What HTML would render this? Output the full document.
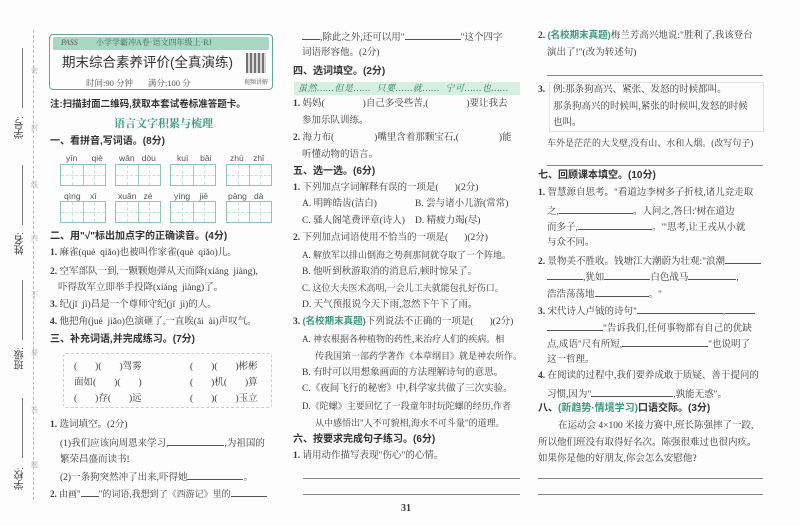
<!DOCTYPE html>
<html><head><meta charset="utf-8">
<style>
*{margin:0;padding:0;box-sizing:border-box}
body{width:800px;height:526px;background:#fdfdfd;position:relative;overflow:hidden;font-family:"Liberation Serif","Noto Serif CJK SC",serif;color:#3a3a3a;font-size:9.5px}
.l{position:absolute;white-space:nowrap;line-height:14px;height:14px}
.j{text-align:justify;text-align-last:justify;white-space:normal;overflow:visible}
.f{font-size:9px;white-space:nowrap}
.m{width:218px}.r{width:216px}.lw{width:222px}
.h{font-family:"Liberation Sans","Noto Sans CJK SC",sans-serif;font-weight:bold;color:#333;font-size:10px}
.g{color:#3c9a7c;font-family:"Liberation Sans","Noto Sans CJK SC",sans-serif;font-weight:bold}
.u{display:inline-block;border-bottom:1px solid #555;height:11px;vertical-align:baseline}
.py{font-family:"Liberation Sans",sans-serif;font-size:8.5px;color:#555}
.box{position:absolute;border:1px solid #8cc8b0;height:22px;display:flex}
.box div{flex:1;border-right:1px solid #9cd0bc;position:relative}
.box div:last-child{border-right:none}
.box div:after{content:"";position:absolute;left:50%;top:0;bottom:0;border-left:1px dashed #c6e4d8}
.box div:before{content:"";position:absolute;top:50%;left:0;right:0;border-top:1px dashed #c6e4d8}
.hr{position:absolute;border-top:1px solid #888;height:0}
.side{position:absolute;font-family:"Liberation Sans","Noto Sans CJK SC",sans-serif;font-size:10px;color:#444;writing-mode:vertical-rl;transform:rotate(180deg)}
.sm{position:absolute;font-size:7px;color:#aaa}
</style></head><body>

<div style="position:absolute;left:33px;top:30px;height:470px;border-left:1px dashed #bbb"></div>
<div style="position:absolute;left:22px;top:48px;height:60px;border-left:1px solid #777"></div>
<div style="position:absolute;left:22px;top:165px;height:60px;border-left:1px solid #777"></div>
<div style="position:absolute;left:22px;top:280px;height:60px;border-left:1px solid #777"></div>
<div style="position:absolute;left:22px;top:398px;height:60px;border-left:1px solid #777"></div>
<div class="side" style="left:13px;top:116px">学号:</div>
<div class="side" style="left:13px;top:232px">姓名:</div>
<div class="side" style="left:13px;top:347px">班级:</div>
<div class="side" style="left:13px;top:467px">学校:</div>
<div class="sm" style="left:31px;top:66px">密</div>
<div class="sm" style="left:31px;top:123px">封</div>
<div class="sm" style="left:31px;top:180px">线</div>
<div class="sm" style="left:31px;top:233px">内</div>
<div class="sm" style="left:31px;top:290px">不</div>
<div class="sm" style="left:31px;top:348px">要</div>
<div class="sm" style="left:31px;top:405px">答</div>
<div class="sm" style="left:31px;top:460px">题</div>

<div style="position:absolute;left:49px;top:34px;width:224px;height:56px;border:1.5px solid #5fa98e;border-radius:4px"></div>
<div style="position:absolute;left:53px;top:37px;width:216px;height:13px;background:#a8d8c4;border-radius:2px"></div>
<div class="l" style="left:61px;top:36px;font-size:8px;color:#555;font-style:italic">PASS</div>
<div class="l" style="left:96px;top:36px;font-size:8px;color:#2f6f58">小学学霸冲A卷·语文四年级上·RJ</div>
<div class="l" style="left:62px;top:54px;font-size:13.5px;height:18px;line-height:18px;font-family:'Liberation Sans','Noto Sans CJK SC',sans-serif;color:#333">期末综合素养评价(全真演练)</div>
<div style="position:absolute;left:246px;top:53px;width:20px;height:20px;background:repeating-linear-gradient(90deg,#444 0 2px,#ccc 2px 4px);opacity:.75"></div>
<div class="l" style="left:244px;top:76px;font-size:6px;color:#555">视频讲解</div>
<div class="l" style="left:86px;top:76px;font-size:8.5px;color:#555">时间:90 分钟 &nbsp;&nbsp;&nbsp;&nbsp;&nbsp; 满分:100 分</div>

<div class="l h" style="left:50px;top:98px;font-size:9.5px">注:扫描封面二维码,获取本套试卷标准答题卡。</div>
<div class="l g" style="left:114px;top:117px;font-size:11px;font-family:'Liberation Serif','Noto Serif CJK SC',serif">语言文字积累与梳理</div>
<div class="l h" style="left:50px;top:135px">一、看拼音,写词语。(8分)</div>
<div class="l py" style="left:66px;top:151px">yīn &nbsp;&nbsp;&nbsp;&nbsp;&nbsp;qiè</div>
<div class="l py" style="left:119px;top:151px">wǎn &nbsp;&nbsp;dòu</div>
<div class="l py" style="left:177px;top:151px">kuì &nbsp;&nbsp;&nbsp;&nbsp;bǎi</div>
<div class="l py" style="left:230px;top:151px">zhù &nbsp;&nbsp;&nbsp;zhǐ</div>
<div class="box" style="left:60px;top:164px;width:46px"><div></div><div></div></div>
<div class="box" style="left:115px;top:164px;width:46px"><div></div><div></div></div>
<div class="box" style="left:170px;top:164px;width:46px"><div></div><div></div></div>
<div class="box" style="left:226px;top:164px;width:46px"><div></div><div></div></div>
<div class="l py" style="left:64px;top:189px">qìng &nbsp;&nbsp;&nbsp;xī</div>
<div class="l py" style="left:118px;top:189px">xuǎn &nbsp;&nbsp;zé</div>
<div class="l py" style="left:174px;top:189px">yíng &nbsp;&nbsp;&nbsp;jiē</div>
<div class="l py" style="left:228px;top:189px">pāng &nbsp;&nbsp;dà</div>
<div class="box" style="left:60px;top:201px;width:46px"><div></div><div></div></div>
<div class="box" style="left:115px;top:201px;width:46px"><div></div><div></div></div>
<div class="box" style="left:170px;top:201px;width:46px"><div></div><div></div></div>
<div class="box" style="left:226px;top:201px;width:46px"><div></div><div></div></div>
<div class="l h" style="left:50px;top:230px">二、用"√"标出加点字的正确读音。(4分)</div>
<div class="l" style="left:50px;top:246px"><b>1.</b> 麻雀(què &nbsp;qiǎo)也被叫作家雀(què &nbsp;qiǎo)儿。</div>
<div class="l" style="left:50px;top:265px"><b>2.</b> 空军部队一到,一颗颗炮弹从天而降(xiáng &nbsp;jiàng),</div>
<div class="l" style="left:58px;top:281px">吓得敌军立即举手投降(xiáng &nbsp;jiàng)了。</div>
<div class="l" style="left:50px;top:298px"><b>3.</b> 纪(jǐ &nbsp;jì)昌是一个尊师守纪(jǐ &nbsp;jì)的人。</div>
<div class="l" style="left:50px;top:315px"><b>4.</b> 他把角(jué &nbsp;jiǎo)色演砸了,一直唉(āi &nbsp;ài)声叹气。</div>
<div class="l h" style="left:50px;top:333px">三、补充词语,并完成练习。(7分)</div>
<div style="position:absolute;left:63px;top:353px;width:209px;height:55px;border:1px dashed #b8d8cc;border-radius:3px"></div>
<div class="l" style="left:74px;top:360px">(<span style="display:inline-block;width:18px"></span>)(<span style="display:inline-block;width:18px"></span>)驾雾</div>
<div class="l" style="left:190px;top:360px">(<span style="display:inline-block;width:18px"></span>)(<span style="display:inline-block;width:18px"></span>)彬彬</div>
<div class="l" style="left:74px;top:376px">面如(<span style="display:inline-block;width:18px"></span>)(<span style="display:inline-block;width:18px"></span>)</div>
<div class="l" style="left:190px;top:376px">(<span style="display:inline-block;width:18px"></span>)机(<span style="display:inline-block;width:18px"></span>)算</div>
<div class="l" style="left:74px;top:392px">(<span style="display:inline-block;width:18px"></span>)存(<span style="display:inline-block;width:18px"></span>)远</div>
<div class="l" style="left:190px;top:392px">(<span style="display:inline-block;width:18px"></span>)(<span style="display:inline-block;width:18px"></span>)玉立</div>
<div class="l" style="left:50px;top:418px"><b>1.</b> 选词填空。(2分)</div>
<div class="l" style="left:60px;top:435px">(1)我们应该向周恩来学习,<span class="u" style="width:56px"></span>,为祖国的</div>
<div class="l" style="left:60px;top:453px">繁荣昌盛而读书!</div>
<div class="l" style="left:60px;top:469px">(2)一条狗突然冲了出来,吓得她<span class="u" style="width:56px"></span>。</div>
<div class="l f" style="left:50px;top:486px"><b>2.</b> 由画"<span class="u" style="width:18px"></span>"的词语,我想到了《西游记》里的<span class="u" style="width:36px"></span></div>

<div class="l" style="left:302px;top:29px"><span class="u" style="width:18px"></span>,除此之外,还可以用"<span class="u" style="width:56px"></span>"这个四字</div>
<div class="l" style="left:302px;top:46px">词语形容他。(2分)</div>
<div class="l h" style="left:293px;top:65px">四、选词填空。(2分)</div>
<div style="position:absolute;left:294px;top:82px;width:226px;height:13px;background:#d6eee4"></div>
<div class="l" style="left:298px;top:81px;color:#2f7a60;font-size:9px;font-style:italic;letter-spacing:0.6px">虽然……但是…… &nbsp;只要……就…… &nbsp;宁可……也……</div>
<div class="l" style="left:293px;top:97px"><b>1.</b> 妈妈(<span style="display:inline-block;width:38px"></span>)自己多受些苦,(<span style="display:inline-block;width:38px"></span>)要让我去</div>
<div class="l" style="left:302px;top:114px">参加乐队训练。</div>
<div class="l" style="left:293px;top:131px"><b>2.</b> 海力布(<span style="display:inline-block;width:40px"></span>)嘴里含着那颗宝石,(<span style="display:inline-block;width:40px"></span>)能</div>
<div class="l" style="left:302px;top:148px">听懂动物的语言。</div>
<div class="l h" style="left:293px;top:165px">五、选一选。(6分)</div>
<div class="l" style="left:293px;top:181px"><b>1.</b> 下列加点字词解释有误的一项是(<span style="display:inline-block;width:16px"></span>)(2分)</div>
<div class="l" style="left:302px;top:197px">A. 明眸皓齿(洁白)</div><div class="l" style="left:415px;top:197px">B. 尝与诸小儿游(常常)</div>
<div class="l" style="left:302px;top:214px">C. 骚人阁笔费评章(诗人)</div><div class="l" style="left:415px;top:214px">D. 精疲力竭(尽)</div>
<div class="l" style="left:293px;top:231px"><b>2.</b> 下列加点词语使用不恰当的一项是(<span style="display:inline-block;width:16px"></span>)(2分)</div>
<div class="l f" style="left:302px;top:248px">A. 解放军以排山倒海之势刹那间就夺取了一个阵地。</div>
<div class="l" style="left:302px;top:265px">B. 他听到秋游取消的消息后,顿时惊呆了。</div>
<div class="l f" style="left:302px;top:281px">C. 这位大夫医术高明,一会儿工夫就能包扎好伤口。</div>
<div class="l" style="left:302px;top:298px">D. 天气预报说今天下雨,忽然下午下了雨。</div>
<div class="l" style="left:293px;top:315px"><b>3.</b> <span class="g">(名校期末真题)</span>下列说法不正确的一项是(<span style="display:inline-block;width:16px"></span>)(2分)</div>
<div class="l f" style="left:302px;top:332px">A. 神农根据各种植物的药性,来治疗人们的疾病。相</div>
<div class="l f" style="left:315px;top:349px">传我国第一部药学著作《本草纲目》就是神农所作。</div>
<div class="l" style="left:302px;top:366px">B. 有时可以用想象画面的方法理解诗句的意思。</div>
<div class="l" style="left:302px;top:382px">C.《夜间飞行的秘密》中,科学家共做了三次实验。</div>
<div class="l f" style="left:302px;top:399px">D.《陀螺》主要回忆了一段童年时玩陀螺的经历,作者</div>
<div class="l f" style="left:315px;top:416px">从中感悟出"人不可貌相,海水不可斗量"的道理。</div>
<div class="l h" style="left:293px;top:433px">六、按要求完成句子练习。(6分)</div>
<div class="l" style="left:293px;top:449px"><b>1.</b> 请用动作描写表现"伤心"的心情。</div>
<div class="hr" style="left:303px;top:478px;width:217px"></div>
<div class="hr" style="left:303px;top:494px;width:217px"></div>
<div class="l" style="left:401px;top:502px;font-weight:bold;font-size:10px">31</div>

<div class="l" style="left:538px;top:29px"><b>2.</b> <span class="g">(名校期末真题)</span>梅兰芳高兴地说:"胜利了,我该登台</div>
<div class="l" style="left:547px;top:46px">演出了!"(改为转述句)</div>
<div class="hr" style="left:547px;top:75px;width:216px"></div>
<div class="l" style="left:538px;top:83px"><b>3.</b></div>
<div style="position:absolute;left:549px;top:82px;width:215px;height:50px;border:1px solid #e2e2e2"></div>
<div class="l" style="left:553px;top:83px">例:那条狗高兴、紧张、发怒的时候都叫。</div>
<div class="l" style="left:553px;top:100px">那条狗高兴的时候叫,紧张的时候叫,发怒的时候</div>
<div class="l" style="left:553px;top:116px">也叫。</div>
<div class="l f" style="left:547px;top:136px">车外是茫茫的大戈壁,没有山、水和人烟。(改写句子)</div>
<div class="hr" style="left:547px;top:165px;width:216px"></div>
<div class="l h" style="left:538px;top:169px">七、回顾课本填空。(10分)</div>
<div class="l" style="left:538px;top:186px"><b>1.</b> 智慧源自思考。"看道边李树多子折枝,诸儿竞走取</div>
<div class="l" style="left:547px;top:203px">之,<span class="u" style="width:74px"></span>。人问之,答曰:'树在道边</div>
<div class="l" style="left:547px;top:219px">而多子,<span class="u" style="width:74px"></span>。'"思考,让王戎从小就</div>
<div class="l" style="left:547px;top:236px">与众不同。</div>
<div class="l" style="left:538px;top:253px"><b>2.</b> 景物美不胜收。钱塘江大潮蔚为壮观:"浪潮<span class="u" style="width:36px"></span></div>
<div class="l" style="left:547px;top:269px"><span class="u" style="width:36px"></span>,犹如<span class="u" style="width:46px"></span>白色战马<span class="u" style="width:48px"></span>,</div>
<div class="l" style="left:547px;top:286px">浩浩荡荡地<span class="u" style="width:54px"></span>。"</div>
<div class="l" style="left:538px;top:303px"><b>3.</b> 宋代诗人卢钺的诗句"<span class="u" style="width:86px"></span>,<span class="u" style="width:30px"></span></div>
<div class="l" style="left:547px;top:320px"><span class="u" style="width:56px"></span>"告诉我们,任何事物都有自己的优缺</div>
<div class="l" style="left:547px;top:336px">点,成语"尺有所短,<span class="u" style="width:86px"></span>"也说明了</div>
<div class="l" style="left:547px;top:353px">这一哲理。</div>
<div class="l" style="left:538px;top:369px"><b>4.</b> 在阅读的过程中,我们要养成敢于质疑、善于提问的</div>
<div class="l" style="left:547px;top:386px">习惯,因为"<span class="u" style="width:82px"></span>,孰能无惑"。</div>
<div class="l h" style="left:538px;top:402px">八、<span class="g">(新趋势·情境学习)</span>口语交际。(3分)</div>
<div class="l" style="left:558px;top:419px">在运动会 4×100 米接力赛中,班长陈强摔了一跤,</div>
<div class="l" style="left:538px;top:436px">所以他们班没有取得好名次。陈强很难过也很内疚。</div>
<div class="l" style="left:538px;top:452px">如果你是他的好朋友,你会怎么安慰他?</div>
<div class="hr" style="left:538px;top:478px;width:225px"></div>
<div class="hr" style="left:538px;top:494px;width:225px"></div>
</body></html>
